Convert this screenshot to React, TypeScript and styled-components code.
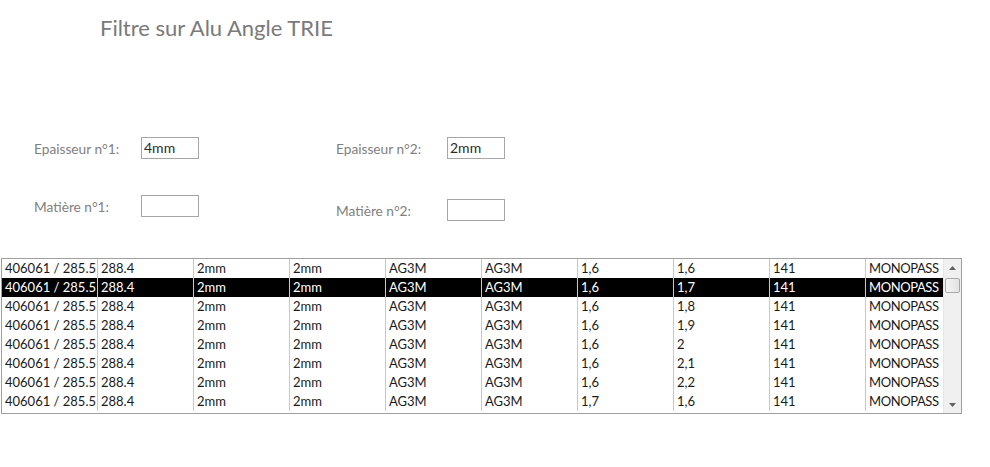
import React from 'react'
import styled, { createGlobalStyle } from 'styled-components'

const GlobalStyle = createGlobalStyle`
  body {
    margin: 0;
    background: #ffffff;
    font-family: Lato, "Liberation Sans", sans-serif;
  }
`

const Page = styled.div`
  width: 990px;
  height: 467px;
  padding-top: 14px;
  box-sizing: border-box;
`

const Title = styled.h1`
  margin: 0 0 0 100px;
  font-size: 22px;
  font-weight: normal;
  color: #7a7a7a;
  line-height: 28px;
`

const FormArea = styled.div`
  display: flex;
  margin-top: 95px;
`

const FieldColumn = styled.div<{ $left: number; $labelWidth: number }>`
  display: flex;
  flex-direction: column;
  gap: 36px;
  margin-left: ${p => p.$left}px;
  --label-width: ${p => p.$labelWidth}px;
`

const Field = styled.div<{ $shift?: number }>`
  display: flex;
  align-items: center;
  height: 22px;
  margin-top: ${p => p.$shift ?? 0}px;
`

const Label = styled.label`
  width: var(--label-width);
  font-size: 13.7px;
  color: #7f7f7f;
`

const Input = styled.div`
  width: 58px;
  height: 22px;
  box-sizing: border-box;
  border: 1px solid #a6a6a6;
  padding: 0 2px;
  font-size: 14px;
  line-height: 20px;
  color: #2b2b2b;
`

const ListBox = styled.div`
  display: flex;
  margin: 37px 0 0 1px;
  width: 961px;
  height: 156px;
  box-sizing: border-box;
  border: 1px solid #a0a0a0;
`

const Rows = styled.div`
  flex: 1;
  overflow: hidden;
`

const Row = styled.div<{ $selected?: boolean }>`
  display: grid;
  grid-template-columns: 95px repeat(8, 96px) 1fr;
  height: 19px;
  background: ${p => (p.$selected ? '#000000' : 'transparent')};
  color: ${p => (p.$selected ? '#ffffff' : '#1a1a1a')};
`

const Cell = styled.div`
  padding-left: 3px;
  font-size: 13px;
  line-height: 19px;
  white-space: nowrap;
  overflow: hidden;
  & + & {
    border-left: 1px solid #c8c8c8;
  }
  &:last-child {
    letter-spacing: -0.4px;
  }
`

const ScrollBar = styled.div`
  width: 17px;
  display: flex;
  flex-direction: column;
  background: #f0f0f0;
  border-left: 1px solid #e6e6e6;
`

const ScrollArrow = styled.div`
  height: 17px;
  display: flex;
  align-items: center;
  justify-content: center;
`

const Thumb = styled.div`
  margin: 2px 1px 0;
  height: 15px;
  box-sizing: border-box;
  border: 1px solid #a9a9a9;
  border-radius: 2px;
  background: linear-gradient(to right, #f4f4f4, #e2e2e2);
`

const Track = styled.div`
  flex: 1;
`

const Arrow = ({ up }: { up?: boolean }) => (
  <svg width="7" height="4" viewBox="0 0 7 4">
    <path d={up ? 'M0 4 L3.5 0 L7 4 Z' : 'M0 0 L3.5 4 L7 0 Z'} fill="#606060" />
  </svg>
)

const data = [
  ['1,6', '1,6'],
  ['1,6', '1,7'],
  ['1,6', '1,8'],
  ['1,6', '1,9'],
  ['1,6', '2'],
  ['1,6', '2,1'],
  ['1,6', '2,2'],
  ['1,7', '1,6'],
]

function App() {
  return (
    <Page>
      <GlobalStyle />
      <Title>Filtre sur Alu Angle TRIE</Title>
      <FormArea>
        <FieldColumn $left={34} $labelWidth={107}>
          <Field>
            <Label>Epaisseur n°1:</Label>
            <Input>4mm</Input>
          </Field>
          <Field>
            <Label>Matière n°1:</Label>
            <Input />
          </Field>
        </FieldColumn>
        <FieldColumn $left={137} $labelWidth={111}>
          <Field>
            <Label>Epaisseur n°2:</Label>
            <Input>2mm</Input>
          </Field>
          <Field $shift={4}>
            <Label>Matière n°2:</Label>
            <Input />
          </Field>
        </FieldColumn>
      </FormArea>
      <ListBox>
        <Rows>
          {data.map(([a, b], i) => (
            <Row key={i} $selected={i === 1}>
              <Cell>406061 / 285.5</Cell>
              <Cell>288.4</Cell>
              <Cell>2mm</Cell>
              <Cell>2mm</Cell>
              <Cell>AG3M</Cell>
              <Cell>AG3M</Cell>
              <Cell>{a}</Cell>
              <Cell>{b}</Cell>
              <Cell>141</Cell>
              <Cell>MONOPASS</Cell>
            </Row>
          ))}
        </Rows>
        <ScrollBar>
          <ScrollArrow><Arrow up /></ScrollArrow>
          <Thumb />
          <Track />
          <ScrollArrow><Arrow /></ScrollArrow>
        </ScrollBar>
      </ListBox>
    </Page>
  )
}

export default App
